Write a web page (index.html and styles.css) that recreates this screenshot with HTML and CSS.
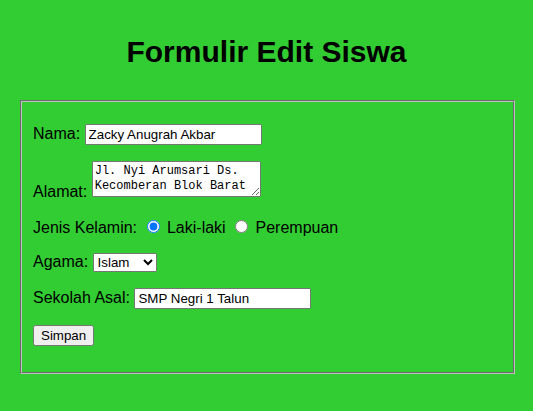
FILE: index.html
```html
<!DOCTYPE html>
<html lang="id">
<head>
<meta charset="utf-8">
<title>Formulir Edit Siswa</title>
<link rel="stylesheet" href="styles.css">
</head>
<body>
<h1 class="title">Formulir Edit Siswa</h1>
<form class="form">
  <fieldset class="box">
    <p class="row">
      <label for="nama">Nama: </label>
      <input class="field" type="text" id="nama" value="Zacky Anugrah Akbar">
    </p>
    <p class="row">
      <label for="alamat">Alamat: </label>
      <textarea class="area" id="alamat">Jl. Nyi Arumsari Ds. Kecomberan Blok Barat</textarea>
    </p>
    <p class="row">
      <label>Jenis Kelamin: </label>
      <label class="opt"><input type="radio" name="jk" value="L" checked> Laki-laki</label>
      <label class="opt"><input type="radio" name="jk" value="P"> Perempuan</label>
    </p>
    <p class="row">
      <label for="agama">Agama: </label>
      <select class="pick" id="agama">
        <option>Islam</option>
        <option>Kristen</option>
        <option>Hindu</option>
        <option>Budha</option>
      </select>
    </p>
    <p class="row">
      <label for="sekolah">Sekolah Asal: </label>
      <input class="field" type="text" id="sekolah" value="SMP Negri 1 Talun">
    </p>
    <p class="row">
      <button class="btn" type="button">Simpan</button>
    </p>
  </fieldset>
</form>
</body>
</html>
```

FILE: styles.css
```css
html, body {
  background: #32cd32;
}
body {
  margin: 0;
  font-family: "Liberation Sans", Arial, sans-serif;
  font-size: 16px;
  color: #000;
}
.title {
  margin: 34px 0 30px;
  font-size: 30px;
  line-height: 36px;
  text-align: center;
  font-weight: bold;
}
.form {
  margin: 0 18px 0 20px;
}
.box {
  margin: 0;
  border: 2px groove #c0c0c0;
  padding: 5.6px 12px 10px 11px;
}
.row {
  margin: 16px 0;
}
.field {
  font-family: "Liberation Sans", Arial, sans-serif;
  font-size: 13.33px;
  width: 169px;
}
.area {
  font-family: "Liberation Mono", "DejaVu Sans Mono", monospace;
  font-size: 12px;
  line-height: 15px;
  width: 163px;
  height: 30px;
}
.pick, .btn {
  font-family: "Liberation Sans", Arial, sans-serif;
  font-size: 13.33px;
}
```
